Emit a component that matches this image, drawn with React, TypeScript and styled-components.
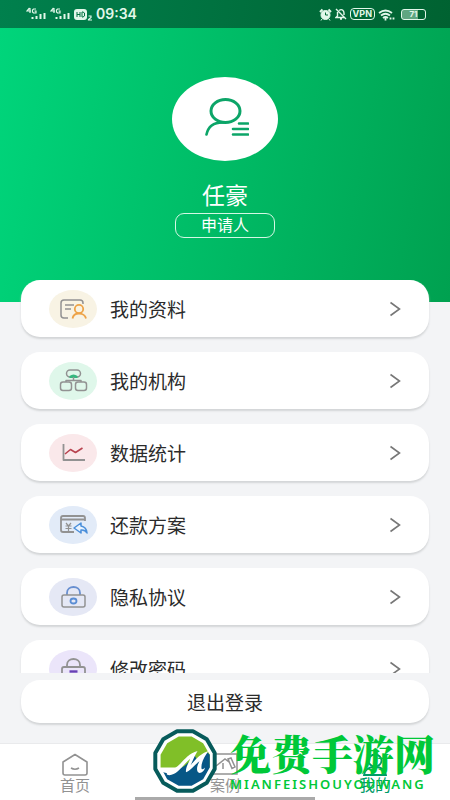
import React from "react";
import styled, { createGlobalStyle } from "styled-components";

const GlobalStyle = createGlobalStyle`
  * { box-sizing: border-box; }
  body {
    margin: 0;
    background: #f3f4f6;
    font-family: "Noto Sans", "Noto Sans CJK SC", sans-serif;
    color: #2b2b2b;
  }
  button { font: inherit; color: inherit; border: 0; cursor: pointer; }
  a { color: inherit; text-decoration: none; }
  svg { display: block; flex: none; }
  h1, p { margin: 0; font-weight: 400; }
`;

const Screen = styled.div`
  position: relative;
  display: flex;
  flex-direction: column;
  height: 100vh;
  overflow: hidden;
`;

const StatusBar = styled.div`
  display: flex;
  align-items: center;
  justify-content: space-between;
  flex: none;
  height: 28px;
  padding: 0 24px 0 26px;
  background: linear-gradient(100deg, #00804d, #006231);
  color: #e2f7ea;
`;

const StatusGroup = styled.div`
  display: flex;
  align-items: center;
  gap: 3px;
`;

const Clock = styled.time`
  font: 600 14px/20px Inter, sans-serif;
`;

const VpnTag = styled.span`
  padding: 0 2px;
  border: 1px solid currentColor;
  border-radius: 4px;
  font: 700 9px/10px Inter, sans-serif;
`;

const Battery = styled.span`
  width: 25px;
  margin-left: 3px;
  border: 1px solid currentColor;
  border-radius: 3px;
  background: linear-gradient(90deg, #5fa681 70%, transparent 70%);
  font: 700 8px/9px Inter, sans-serif;
  text-align: center;
`;

const Profile = styled.header`
  display: flex;
  flex-direction: column;
  align-items: center;
  flex: none;
  height: 274px;
  padding-top: 49px;
  background: linear-gradient(100deg, #00d57b, #00a150);
  color: #fff;
`;

const Avatar = styled.div`
  display: grid;
  place-items: center;
  width: 106px;
  height: 84px;
  border-radius: 50%;
  background: #fff;
`;

const Name = styled.h1`
  margin-top: 18px;
  font-size: 23px;
  line-height: 32px;
`;

const Role = styled.p`
  width: 100px;
  margin-top: 2px;
  border: 1px solid #d4f7e4;
  border-radius: 9px;
  font-size: 16px;
  line-height: 23px;
  text-align: center;
`;

const Menu = styled.main`
  display: flex;
  flex-direction: column;
  gap: 15px;
  flex: 1;
  min-height: 0;
  margin-top: -22px;
  padding: 0 21px;
  overflow: hidden;
`;

const Card = styled.button`
  display: flex;
  align-items: center;
  flex: none;
  width: 100%;
  border-radius: 19px;
  background: #fff;
  box-shadow: 0 2px 2px #d3d5d7;
  font-size: 19px;
`;

const MenuCard = styled(Card)`
  height: 57px;
  padding: 0 28px;
  text-align: left;
`;

const MenuLabel = styled.span`
  flex: 1;
  margin-left: 13px;
`;

const Badge = styled.span<{ $tint: string }>`
  display: grid;
  place-items: center;
  width: 48px;
  height: 38px;
  border-radius: 50%;
  background: ${(p) => p.$tint};
`;

const Footer = styled.div`
  flex: none;
  padding: 7px 21px 20px;
`;

const Logout = styled(Card)`
  justify-content: center;
  height: 43px;
`;

const TabBar = styled.nav`
  display: grid;
  grid-template-columns: repeat(3, 1fr);
  flex: none;
  height: 57px;
  padding-top: 9px;
  border-top: 1px solid #e9eaec;
  background: #fff;
`;

const Tab = styled.a<{ $active?: boolean }>`
  display: flex;
  flex-direction: column;
  align-items: center;
  color: ${(p) => (p.$active ? "#009b68" : "#929292")};
  font-size: ${(p) => (p.$active ? "16px" : "15px")};
  line-height: 16px;
`;

const HomeIndicator = styled.div`
  position: absolute;
  bottom: 0;
  left: 30%;
  right: 30%;
  height: 3px;
  background: #aaa;
`;

const Watermark = styled.div`
  position: absolute;
  right: 12px;
  bottom: 6px;
  display: flex;
  align-items: center;
  gap: 12px;
  pointer-events: none;
`;

const BrandText = styled.div`
  width: 208px;
  color: #00c838;
  white-space: nowrap;
`;

const BrandName = styled.div`
  font: 900 41px/46px "Noto Serif CJK SC", "Noto Sans CJK SC", serif;
`;

const BrandLatin = styled.div`
  font: 600 13px/16px "Noto Sans", sans-serif;
  letter-spacing: 2px;
`;

const Signal = () => (
  <svg width="21" height="14" viewBox="0 0 21 14" fill="none" stroke="currentColor">
    <path d="M3.5 1 1 4h4M4 1v5M10 2H7.5L6.5 3v2l1 1H10V4H8.5" strokeWidth="1.2" />
    <path d="M6.5 12v-2M10.500 12V9M14.500 12V7M18.500 12V6" strokeWidth="2" />
  </svg>
);

const HdIcon = () => (
  <svg width="19" height="13" viewBox="0 0 19 13" fill="none">
    <rect width="13" height="11" y="1" rx="3" fill="currentColor" />
    <path d="M3 4v5M6 4v5M3 6.500h3M8 4v5h1l1.500-1V5L9 4H8" stroke="#00713f" />
    <path d="M14.500 8h2.500v1.500l-2.500 2v.5H18" stroke="currentColor" strokeWidth="1.200" />
  </svg>
);

const AlarmIcon = () => (
  <svg width="13" height="13" viewBox="0 0 13 13" fill="none" stroke="currentColor">
    <circle cx="6.500" cy="7" r="4.500" fill="currentColor" />
    <path d="m1 4 2.500-2.500M12 4 9.500 1.500" strokeWidth="2" />
    <path d="m3 11-1 1.500m8-1.500 1 1.500" />
    <path d="M6.500 4.500V7H9" stroke="#006a37" />
  </svg>
);

const MuteIcon = () => (
  <svg width="12" height="12" viewBox="0 0 12 12" fill="none" stroke="currentColor" strokeWidth="1.400">
    <path d="m1 1 10 10M4 2.500c3-2 5 0 5 2.500v2M2.500 4v4L1 9.500h8M5 11h2" />
  </svg>
);

const WifiIcon = () => (
  <svg width="17" height="13" viewBox="0 0 17 13" fill="none" stroke="currentColor" strokeWidth="1.800">
    <path d="M1 5q6.500-5 13 0M3 7.500q4.500-3.500 9 0M5 10q2.500-2 5 0" />
    <path d="M7.500 10v2.500M12.500 9.500v2M15.500 9.500v2" />
  </svg>
);

const PersonIcon = () => (
  <svg width="48" height="42" viewBox="0 0 48 42" fill="none" stroke="#0ca568" strokeWidth="3" strokeLinecap="round">
    <ellipse cx="24.500" cy="13" rx="14.500" ry="11.500" />
    <path d="M23 24.500C12 24 7 29 5.500 36.500M38 25.500h9M32 31h15M32 36.500h15" strokeWidth="2.600" />
  </svg>
);

const Chevron = () => (
  <svg width="12" height="16" viewBox="0 0 12 16" fill="none" stroke="#777" strokeWidth="1.600">
    <path d="m1.500 1.500 9 6.500-9 6.500" />
  </svg>
);

const Glyph = ({ children }: { children: React.ReactNode }) => (
  <svg width="32" height="26" viewBox="0 0 32 26" fill="none" stroke="#929292" strokeWidth="1.500" strokeLinejoin="round">
    {children}
  </svg>
);

const items = [
  {
    label: "我的资料",
    tint: "#f8f3e4",
    icon: (
      <>
        <path d="M11 22H7q-3 0-3-3V7q0-3 3-3h16q3 0 3 3v1M8 9h9M8 13h6" />
        <g stroke="#eda348" strokeWidth="1.800">
          <circle cx="22" cy="13" r="4.200" />
          <path d="M15.500 22.500c.5-3 3-5 6.500-5s6.500 2 7 5" />
        </g>
      </>
    ),
  },
  {
    label: "我的机构",
    tint: "#dff7ea",
    icon: (
      <>
        <rect x="9.500" y="2" width="14" height="7" rx="3.500" />
        <path d="M12.500 8q4-3 8 0v2h-8z" fill="#36b77f" stroke="none" />
        <path d="M16.500 9v3M9 14v-1.500h15V14" />
        <rect x="3.500" y="14" width="11" height="8.500" rx="2.500" />
        <rect x="18.500" y="14" width="11" height="8.500" rx="2.500" />
      </>
    ),
  },
  {
    label: "数据统计",
    tint: "#fae8ea",
    icon: (
      <>
        <path d="M6.500 4v16H28" strokeWidth="1.800" />
        <path d="m8 14 5.500-4.500 5 3L25.500 8" stroke="#b94450" strokeWidth="1.600" />
      </>
    ),
  },
  {
    label: "还款方案",
    tint: "#e2ebf8",
    icon: (
      <>
        <path d="M28 9V6q0-2-2-2H6Q4 4 4 6v12q0 2 2 2h11M4 7.500h24" strokeWidth="1.800" />
        <path d="m9 11 2.500 3 2.500-3M8.500 14h6M8.500 16.500h6M11.500 14v5" strokeWidth="1.200" />
        <path d="m24 11-7 5 7 5v-3q4-.5 6 3-.5-6-6-7z" fill="#e8f3ff" stroke="#4b8fda" />
      </>
    ),
  },
  {
    label: "隐私协议",
    tint: "#e5e8f5",
    icon: (
      <>
        <path d="M10 11V9c0-8 13-8 13 0v2" stroke="#688fd0" strokeWidth="1.800" />
        <rect x="5" y="11" width="23" height="12" rx="2" />
        <ellipse cx="16.500" cy="17" rx="3" ry="2.500" stroke="#5a8dd4" strokeWidth="1.800" />
      </>
    ),
  },
  {
    label: "修改密码",
    tint: "#ebe5fa",
    icon: (
      <>
        <path d="M10 11V9c0-8 13-8 13 0v2" strokeWidth="1.800" />
        <rect x="5" y="11" width="23" height="12" rx="2" strokeWidth="1.800" />
        <path d="M12.500 15.500h8" stroke="#6840b4" strokeWidth="2.400" />
      </>
    ),
  },
];

const Logo = () => (
  <svg width="66" height="66" viewBox="27 22 200 200">
    <path
      d="m217 146-24 42-42 24h-48l-42-24-24-42V98l24-42 42-24h48l42 24 24 42z"
      fill="#fff"
      stroke="#075b5b"
      strokeWidth="12"
      strokeLinejoin="round"
    />
    <path d="m147 48 35 20 20 35v39H53v-39l20-35 35-20z" fill="#80bf28" />
    <path d="M60 153q56 8 96-48l10 17 29-26 7 7v39l-20 35-35 20h-39l-35-20z" fill="#075786" />
    <path
      d="M51 144q5 6 14 2 4-4 10-1c32 12 45-41 90-53-9 14-13 27-21 43q26-34 54-43c-13 18-23 37-21 52 0 6 7 3 11-2-2 12-18 22-23 12-4-8 0-21 6-31-17 12-26 28-41 33-2-10 6-26 13-41-19 15-35 43-57 49-12 3-18-3-13-6-10 1-19-4-22-14z"
      fill="#fff"
    />
  </svg>
);

export default function App() {
  return (
    <>
      <GlobalStyle />
      <Screen>
        <StatusBar>
          <StatusGroup>
            <Signal />
            <Signal />
            <HdIcon />
            <Clock>09:34</Clock>
          </StatusGroup>
          <StatusGroup>
            <AlarmIcon />
            <MuteIcon />
            <VpnTag>VPN</VpnTag>
            <WifiIcon />
            <Battery>71</Battery>
          </StatusGroup>
        </StatusBar>
        <Profile>
          <Avatar><PersonIcon /></Avatar>
          <Name>任豪</Name>
          <Role>申请人</Role>
        </Profile>
        <Menu>
          {items.map((item) => (
            <MenuCard key={item.label} type="button">
              <Badge $tint={item.tint}><Glyph>{item.icon}</Glyph></Badge>
              <MenuLabel>{item.label}</MenuLabel>
              <Chevron />
            </MenuCard>
          ))}
        </Menu>
        <Footer>
          <Logout type="button">退出登录</Logout>
        </Footer>
        <TabBar>
          <Tab href="#home">
            <svg width="28" height="24" viewBox="0 0 28 24" fill="none" stroke="currentColor" strokeWidth="1.600" strokeLinejoin="round">
              <path d="M2 9 14 1.500 26 9v11q0 2-2 2H4q-2 0-2-2zM10 15q4 2.500 8 0" />
            </svg>
            首页
          </Tab>
          <Tab href="#cases">
            <svg width="28" height="24" viewBox="0 0 28 24" fill="none" stroke="currentColor" strokeWidth="1.500">
              <path d="M2 1h24v20H2zM5 13l9-7 4 3M12 10v6M17 6l3-1 4 9-3 1.500z" />
            </svg>
            案例
          </Tab>
          <Tab href="#mine" $active>
            <svg width="28" height="24" viewBox="0 0 28 24" fill="none" stroke="currentColor" strokeWidth="1.800">
              <ellipse cx="14" cy="7.500" rx="6.500" ry="6" />
              <path d="M3 22q1-8 11-8t11 8z" />
            </svg>
            我的
          </Tab>
        </TabBar>
        <HomeIndicator />
        <Watermark>
          <Logo />
          <BrandText>
            <BrandName>免费手游网</BrandName>
            <BrandLatin>MIANFEISHOUYOUWANG</BrandLatin>
          </BrandText>
        </Watermark>
      </Screen>
    </>
  );
}
